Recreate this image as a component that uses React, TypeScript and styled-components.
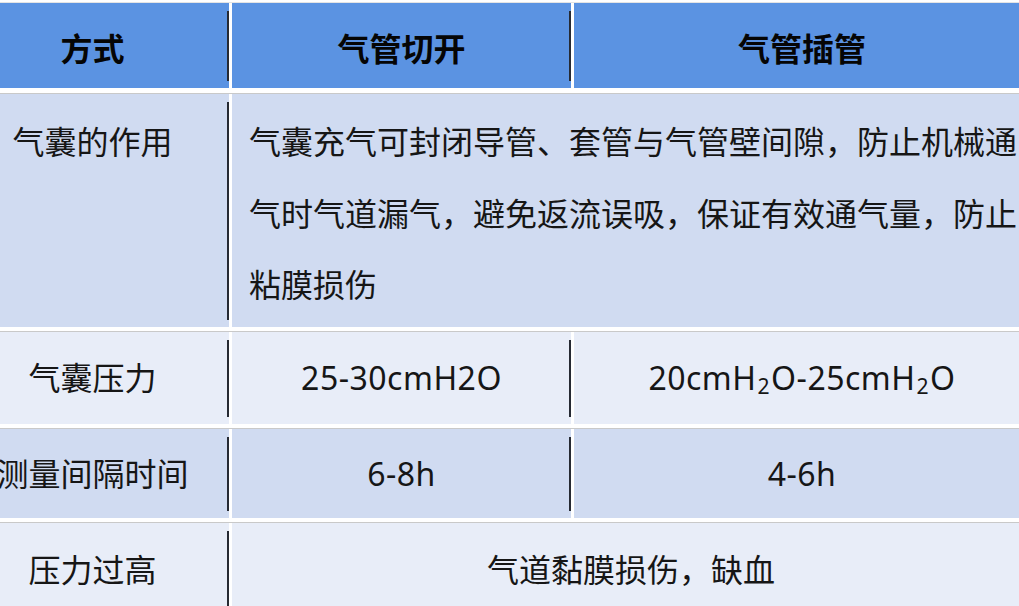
import React from "react";
import styled, { createGlobalStyle, css } from "styled-components";

const GlobalStyle = createGlobalStyle`
    html, body {
        margin: 0;
        padding: 0;
        background: #ffffff;
    }
    body {
        font-family: "Noto Sans", "Noto Sans CJK SC", sans-serif;
        color: #161616;
    }
`;

const TONES = {
    head: "#5b93e2",
    dark: "#d0dbf1",
    light: "#e8edf8",
};

type Tone = keyof typeof TONES;

export default function App() {
    return (
        <>
            <GlobalStyle />
            <Viewport>
                <Table>
                    <Row $height={85} $first>
                        <HeadCell $tone="head" $divider>
                            方式
                        </HeadCell>
                        <HeadCell $tone="head" $divider>
                            气管切开
                        </HeadCell>
                        <HeadCell $tone="head">气管插管</HeadCell>
                    </Row>

                    <Row $height={233} $gap={5}>
                        <Cell $tone="dark" $divider $top>
                            气囊的作用
                        </Cell>
                        <Cell $tone="dark" $span={2} $top $left>
                            气囊充气可封闭导管、套管与气管壁间隙，防止机械通气时气道漏气，避免返流误吸，保证有效通气量，防止粘膜损伤
                        </Cell>
                    </Row>

                    <Row $height={92}>
                        <Cell $tone="light" $divider>
                            气囊压力
                        </Cell>
                        <Cell $tone="light" $divider $latin>
                            25-30cmH2O
                        </Cell>
                        <Cell $tone="light" $latin>
                            <Formula>
                                20cmH<Sub>2</Sub>O-25cmH<Sub>2</Sub>O
                            </Formula>
                        </Cell>
                    </Row>

                    <Row $height={89}>
                        <Cell $tone="dark" $divider>
                            测量间隔时间
                        </Cell>
                        <Cell $tone="dark" $divider $latin>
                            6-8h
                        </Cell>
                        <Cell $tone="dark" $latin>
                            4-6h
                        </Cell>
                    </Row>

                    <Row $height={94}>
                        <Cell $tone="light" $divider>
                            压力过高
                        </Cell>
                        <Cell $tone="light" $span={2}>
                            气道黏膜损伤，缺血
                        </Cell>
                    </Row>
                </Table>
            </Viewport>
        </>
    );
}

const Viewport = styled.div`
    width: 1019px;
    height: 606px;
    overflow: hidden;
    background: #ffffff;
`;

const Table = styled.div`
    display: flex;
    flex-direction: column;
    width: 1074px;
    margin-left: -44px;
    padding-top: 2px;
`;

const Row = styled.div<{ $height: number; $gap?: number; $first?: boolean }>`
    display: grid;
    grid-template-columns: 273px 339px 456px;
    column-gap: 3px;
    min-height: ${p => p.$height}px;
    border-top: 1px solid ${p => (p.$first ? "#e4e4e4" : "#c9c9c9")};
    margin-top: ${p => (p.$first ? 0 : p.$gap ?? 4)}px;
`;

const divider = css`
    &::after {
        content: "";
        position: absolute;
        right: 0;
        top: 8px;
        bottom: 7px;
        width: 2px;
        background: #262a33;
    }
`;

const cellBase = css<{ $tone: Tone; $divider?: boolean; $span?: number }>`
    position: relative;
    display: flex;
    align-items: center;
    justify-content: center;
    background: ${p => TONES[p.$tone]};
    font-size: 32px;
    grid-column: span ${p => p.$span ?? 1};
    ${p => p.$divider && divider}
`;

const HeadCell = styled.div<{ $tone: Tone; $divider?: boolean; $span?: number }>`
    ${cellBase};
    font-family: "Noto Sans CJK SC", sans-serif;
    font-weight: 700;
    color: #050505;
    padding-top: 3px;
`;

const Cell = styled.div<{
    $tone: Tone;
    $divider?: boolean;
    $span?: number;
    $top?: boolean;
    $left?: boolean;
    $latin?: boolean;
}>`
    ${cellBase};
    line-height: 71.5px;
    letter-spacing: ${p => (p.$latin ? "0.5px" : "0")};
    ${p =>
        p.$top &&
        css`
            align-items: flex-start;
            padding-top: 12px;
            padding-bottom: 6px;
        `}
    ${p =>
        p.$left &&
        css`
            justify-content: flex-start;
            padding-left: 17px;
        `}
`;

const Formula = styled.span`
    white-space: nowrap;
`;

const Sub = styled.sub`
    font-size: 0.66em;
    line-height: 0;
    vertical-align: -0.2em;
    margin: 0 1px;
`;
